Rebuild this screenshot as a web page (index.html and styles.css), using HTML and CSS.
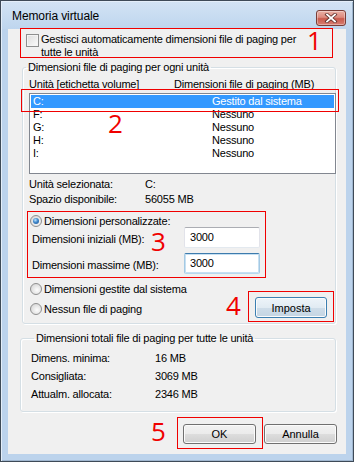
FILE: index.html
```html
<!DOCTYPE html>
<html lang="it">
<head>
    <meta charset="UTF-8">
    <title>Memoria virtuale</title>
    <link rel="stylesheet" href="styles.css">
</head>
<body>
    <div class="window">
        <div class="titlebar">
            <span class="title">Memoria virtuale</span>
            <button class="close-btn" aria-label="Chiudi">
                <svg width="14" height="10" viewBox="0 0 14 10">
                    <path d="M3 1.5 L11 8.5 M11 1.5 L3 8.5" stroke="#5e2e2a" stroke-width="3.4" stroke-linecap="square"/>
                    <path d="M3 1.5 L11 8.5 M11 1.5 L3 8.5" stroke="#fff" stroke-width="1.8" stroke-linecap="square"/>
                </svg>
            </button>
        </div>

        <div class="client">
            <div class="check-row">
                <span class="checkbox"></span>
                <span class="check-label">Gestisci automaticamente dimensioni file di paging per<br>tutte le unità</span>
            </div>

            <fieldset class="group group-drives">
                <legend>Dimensioni file di paging per ogni unità</legend>
                <div class="list-head">
                    <span class="col-drive">Unità [etichetta volume]</span>
                    <span>Dimensioni file di paging (MB)</span>
                </div>
                <div class="listbox">
                    <div class="list-row selected"><span class="col-letter">C:</span><span>Gestito dal sistema</span></div>
                    <div class="list-row"><span class="col-letter">F:</span><span>Nessuno</span></div>
                    <div class="list-row"><span class="col-letter">G:</span><span>Nessuno</span></div>
                    <div class="list-row"><span class="col-letter">H:</span><span>Nessuno</span></div>
                    <div class="list-row"><span class="col-letter">I:</span><span>Nessuno</span></div>
                </div>
                <div class="info">
                    <div class="info-row"><span class="info-label">Unità selezionata:</span><span>C:</span></div>
                    <div class="info-row"><span class="info-label">Spazio disponibile:</span><span>56055 MB</span></div>
                </div>

                <div class="radio-row custom">
                    <span class="radio checked"></span>
                    <span>Dimensioni personalizzate:</span>
                </div>
                <div class="size-row">
                    <span class="size-label">Dimensioni iniziali (MB):</span>
                    <div class="textbox">3000</div>
                </div>
                <div class="size-row second">
                    <span class="size-label">Dimensioni massime (MB):</span>
                    <div class="textbox focused">3000</div>
                </div>

                <div class="lower">
                    <div class="radios">
                        <div class="radio-row"><span class="radio"></span><span>Dimensioni gestite dal sistema</span></div>
                        <div class="radio-row"><span class="radio"></span><span>Nessun file di paging</span></div>
                    </div>
                    <button class="btn btn-set">Imposta</button>
                </div>
            </fieldset>

            <fieldset class="group group-totals">
                <legend>Dimensioni totali file di paging per tutte le unità</legend>
                <div class="total-row"><span class="total-label">Dimens. minima:</span><span>16 MB</span></div>
                <div class="total-row"><span class="total-label">Consigliata:</span><span>3069 MB</span></div>
                <div class="total-row"><span class="total-label">Attualm. allocata:</span><span>2346 MB</span></div>
            </fieldset>

            <div class="buttons">
                <button class="btn">OK</button>
                <button class="btn">Annulla</button>
            </div>
        </div>

        <!-- annotations drawn over the dialog -->
        <div class="mark box-1"></div>
        <div class="mark box-2"></div>
        <div class="mark box-3"></div>
        <div class="mark box-4"></div>
        <div class="mark box-5"></div>
        <span class="num num-1">1</span>
        <span class="num num-2">2</span>
        <span class="num num-3">3</span>
        <span class="num num-4">4</span>
        <span class="num num-5">5</span>
    </div>
</body>
</html>
```

FILE: styles.css
```css
:root {
    --frame: #bcd3ec;
    --face: #f0f0f0;
    --group: #d5dfe5;
    --select: #3399ff;
    --mark: #f00000;
}

* { box-sizing: border-box; margin: 0; padding: 0; }

body {
    width: 354px;
    height: 462px;
    font-family: 'Liberation Sans', Arial, sans-serif;
    font-size: 11px;
    color: #000;
    background: #fff;
    overflow: hidden;
}

.window {
    position: relative;
    width: 354px;
    height: 462px;
    border: 1px solid #3e4a57;
    background: linear-gradient(#d3e3f4 0, #bed5ee 28px, var(--frame) 28px);
    padding: 0 7px 7px;
    display: flex;
    flex-direction: column;
    box-shadow: inset 1px 1px 0 #e4eef9, inset -1px -1px 0 #9fb6cf;
}

.titlebar {
    height: 28px;
    display: flex;
    justify-content: space-between;
    align-items: flex-start;
    padding-left: 4px;
}

.title {
    font-size: 12px;
    line-height: 14px;
    margin-top: 8px;
    letter-spacing: -0.1px;
}

.close-btn {
    margin-top: 9px;
    width: 30px;
    height: 16px;
    border: 1px solid #7a3d37;
    border-radius: 3px;
    background: linear-gradient(#eab1a6 0%, #dd8a7e 45%, #c95a4c 55%, #d77f73 100%);
    box-shadow: inset 0 0 0 1px rgba(255,255,255,0.35);
    display: flex;
    align-items: center;
    justify-content: center;
}

.client {
    flex-grow: 1;
    background: var(--face);
    display: flex;
    flex-direction: column;
}

.check-row {
    display: flex;
    gap: 2px;
    margin-top: 4px;
    padding-left: 18px;
    line-height: 13px;
    letter-spacing: -0.2px;
}

.checkbox {
    width: 13px;
    height: 13px;
    margin-top: 1px;
    border: 1px solid #8e8f8f;
    background: linear-gradient(135deg, #dcdcdc, #fbfbfb);
    box-shadow: inset 0 0 0 1px #f4f4f4;
    flex-shrink: 0;
}

.group {
    border: 1px solid var(--group);
    border-radius: 3px;
    box-shadow: inset 1px 1px 0 #fff, 1px 1px 0 #fff;
    padding: 0;
    min-width: 0;
}

.group legend {
    margin-left: 3px;
    padding: 0 2px;
    line-height: 13px;
    letter-spacing: -0.2px;
}

.group-drives {
    margin: 2px 10px 0 14px;
    padding-bottom: 5px;
}

.list-head {
    display: flex;
    margin: 4px 0 0 6px;
    line-height: 13px;
    letter-spacing: -0.2px;
}

.col-drive { width: 145px; }

.listbox {
    margin: 2px -1px 0 6px;
    height: 81px;
    border: 1px solid #828790;
    background: #fff;
    padding: 1px;
}

.list-row {
    display: flex;
    height: 13px;
    line-height: 13px;
    padding-left: 2px;
    letter-spacing: -0.2px;
}

.list-row.selected {
    background: var(--select);
    color: #fff;
}

.col-letter { width: 179px; }

.info {
    margin: 3px 0 0 6px;
    line-height: 15px;
    letter-spacing: -0.2px;
}

.info-row { display: flex; }

.info-label { width: 116px; }

.radio-row {
    display: flex;
    align-items: center;
    gap: 2px;
    height: 14px;
    padding-left: 7px;
    letter-spacing: -0.2px;
}

.radio-row.custom {
    margin-top: 7px;
}

.radio {
    width: 12px;
    height: 12px;
    border-radius: 50%;
    border: 1px solid #8f8f8f;
    background: radial-gradient(circle at 60% 60%, #fdfdfd 0, #dcdcdc 70%);
    flex-shrink: 0;
    position: relative;
}

.radio.checked::after {
    content: '';
    position: absolute;
    left: 2px;
    top: 2px;
    width: 6px;
    height: 6px;
    border-radius: 50%;
    background: radial-gradient(circle at 40% 35%, #bfe6ff 0, #3e86c9 45%, #1b4f8d 100%);
}

.size-row {
    display: flex;
    align-items: center;
    height: 21px;
    margin-top: -1px;
    padding-left: 9px;
    letter-spacing: -0.2px;
}

.size-row.second { margin-top: 5px; }

.size-label {
    width: 152px;
    padding-top: 3px;
}

.textbox {
    width: 76px;
    height: 21px;
    background: #fff;
    border: 1px solid;
    border-color: #abadb3 #e2e3ea #e3e9ef #e2e3ea;
    border-radius: 2px;
    padding-left: 5px;
    line-height: 19px;
}

.textbox.focused {
    border-color: #3d7bad #a4c9e3 #b7d9ed #a4c9e3;
    box-shadow: inset 0 0 0 1px #c7e0f2;
}

.lower {
    display: flex;
    justify-content: space-between;
    margin-top: 8px;
    padding-right: 8px;
}

.radios {
    display: flex;
    flex-direction: column;
    gap: 6px;
}

.btn {
    font-family: inherit;
    font-size: 11px;
    color: #000;
    width: 73px;
    height: 20px;
    border: 1px solid #707070;
    border-radius: 3px;
    background: linear-gradient(#f2f2f2 0%, #ebebeb 50%, #dddddd 50%, #cfcfcf 100%);
    box-shadow: inset 0 0 0 1px #fbfbfb;
}

.btn-set {
    width: 72px;
    height: 21px;
    margin-top: 15px;
    border-color: #3c7fb1;
    background: linear-gradient(#eef4f9 0%, #e1ebf3 50%, #cfdde9 50%, #c4d5e3 100%);
}

.group-totals {
    margin: 8px 10px 0 12px;
    padding: 4px 0 8px 10px;
}

.total-row {
    display: flex;
    line-height: 18px;
    letter-spacing: -0.2px;
}

.total-label { width: 124px; }

.buttons {
    display: flex;
    justify-content: flex-end;
    gap: 8px;
    margin-top: 12px;
    padding-right: 9px;
}

/* red callouts */
.mark {
    position: absolute;
    border: 1px solid var(--mark);
    z-index: 2;
}

.box-1 { left: 19px; top: 27px; width: 313px; height: 30px; }
.box-2 { left: 20px; top: 88px; width: 318px; height: 23px; }
.box-3 { left: 26px; top: 210px; width: 239px; height: 67px; }
.box-4 { left: 247px; top: 290px; width: 86px; height: 31px; }
.box-5 { left: 176px; top: 416px; width: 86px; height: 32px; }

.num {
    position: absolute;
    z-index: 2;
    font-family: 'Open Sans', sans-serif;
    font-size: 26px;
    line-height: 26px;
    color: var(--mark);
}

.num-1 { left: 306px; top: 26px; }
.num-2 { left: 107px; top: 109px; }
.num-3 { left: 150px; top: 227px; }
.num-4 { left: 225px; top: 291px; }
.num-5 { left: 150px; top: 417px; }
```
